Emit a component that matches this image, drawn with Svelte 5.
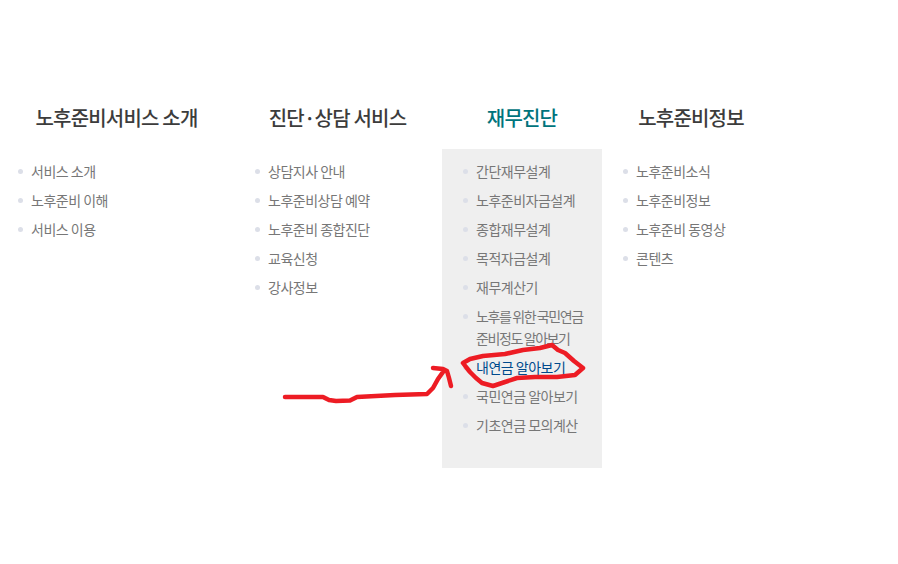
<script>
  const menus = [
    { title: "노후준비서비스 소개", items: ["서비스 소개", "노후준비 이해", "서비스 이용"] },
    { title: "진단·상담 서비스", items: ["상담지사 안내", "노후준비상담 예약", "노후준비 종합진단", "교육신청", "강사정보"] },
    {
      title: "재무진단",
      active: true,
      items: ["간단재무설계", "노후준비자금설계", "종합재무설계", "목적자금설계", "재무계산기", "노후를 위한 국민연금\n준비정도 알아보기", "내연금 알아보기", "국민연금 알아보기", "기초연금 모의계산"],
    },
    { title: "노후준비정보", items: ["노후준비소식", "노후준비정보", "노후준비 동영상", "콘텐츠"] },
  ];
  const current = "내연금 알아보기";
</script>

<div class="page">
  <nav class="menu">
    {#each menus as menu}
      <section class="col" class:active={menu.active}>
        <h2>{menu.title}</h2>
        <ul>
          {#each menu.items as item}
            <li class:current={item === current} class:tight={item.includes("\n")}>{item}</li>
          {/each}
        </ul>
      </section>
    {/each}
  </nav>

  <svg class="marks" width="898" height="564" viewBox="0 0 898 564" fill="none" stroke="#ed1c24" stroke-width="4.5" stroke-linecap="round" stroke-linejoin="round">
    <path d="M285 397 L323 397 L329 400 L336 401 L350 400.5 L357 397 L395 395 L427 394 L433 388 L438 379 L443 372 M433 368 L443 369 L447 371 L449 378 L451 386" />
    <path d="M463 363 L470 359 L483 356 L505 354 L523 350 L540 348 L552 345 L558 350 L565 353 L574 361 L583 368 L575 375 L557 377 L535 377 L517 378 L505 382 L493 386 L482 383 L476 378 L470 372 L466 367 Z" />
  </svg>
</div>

<style>
  :global(body) {
    margin: 0;
    background: #fff;
  }

  .page {
    position: relative;
    width: 898px;
    height: 564px;
    overflow: hidden;
    font-family: "Noto Sans CJK KR", "Noto Sans", sans-serif;
  }

  .menu {
    display: grid;
    grid-template-columns: 233px 209px 160px 178px;
    padding-top: 101px;
  }

  h2 {
    margin: 0;
    height: 48px;
    font-size: 20px;
    line-height: 33px;
    font-weight: 500;
    letter-spacing: -0.8px;
    text-align: center;
    color: #3c3c3c;
  }

  .active h2 {
    color: #00747c;
  }

  ul {
    margin: 0;
    padding: 11px 10px 25px 22px;
    list-style: none;
  }

  .active ul {
    background: #efefef;
  }

  .col:first-child ul {
    padding-left: 19px;
  }

  .col:nth-child(2) ul {
    padding-left: 23px;
  }

  li {
    position: relative;
    padding: 0 0 7px 12px;
    font-size: 14px;
    line-height: 22px;
    letter-spacing: -0.5px;
    white-space: pre-line;
    color: #777;
  }

  li.tight {
    letter-spacing: -1.4px;
  }

  li::before {
    content: "";
    position: absolute;
    left: -1px;
    top: 9px;
    width: 5px;
    height: 5px;
    border-radius: 50%;
    background: #dcdfe8;
  }

  li.current {
    color: #004a8c;
  }

  .marks {
    position: absolute;
    left: 0;
    top: 0;
    pointer-events: none;
  }
</style>
